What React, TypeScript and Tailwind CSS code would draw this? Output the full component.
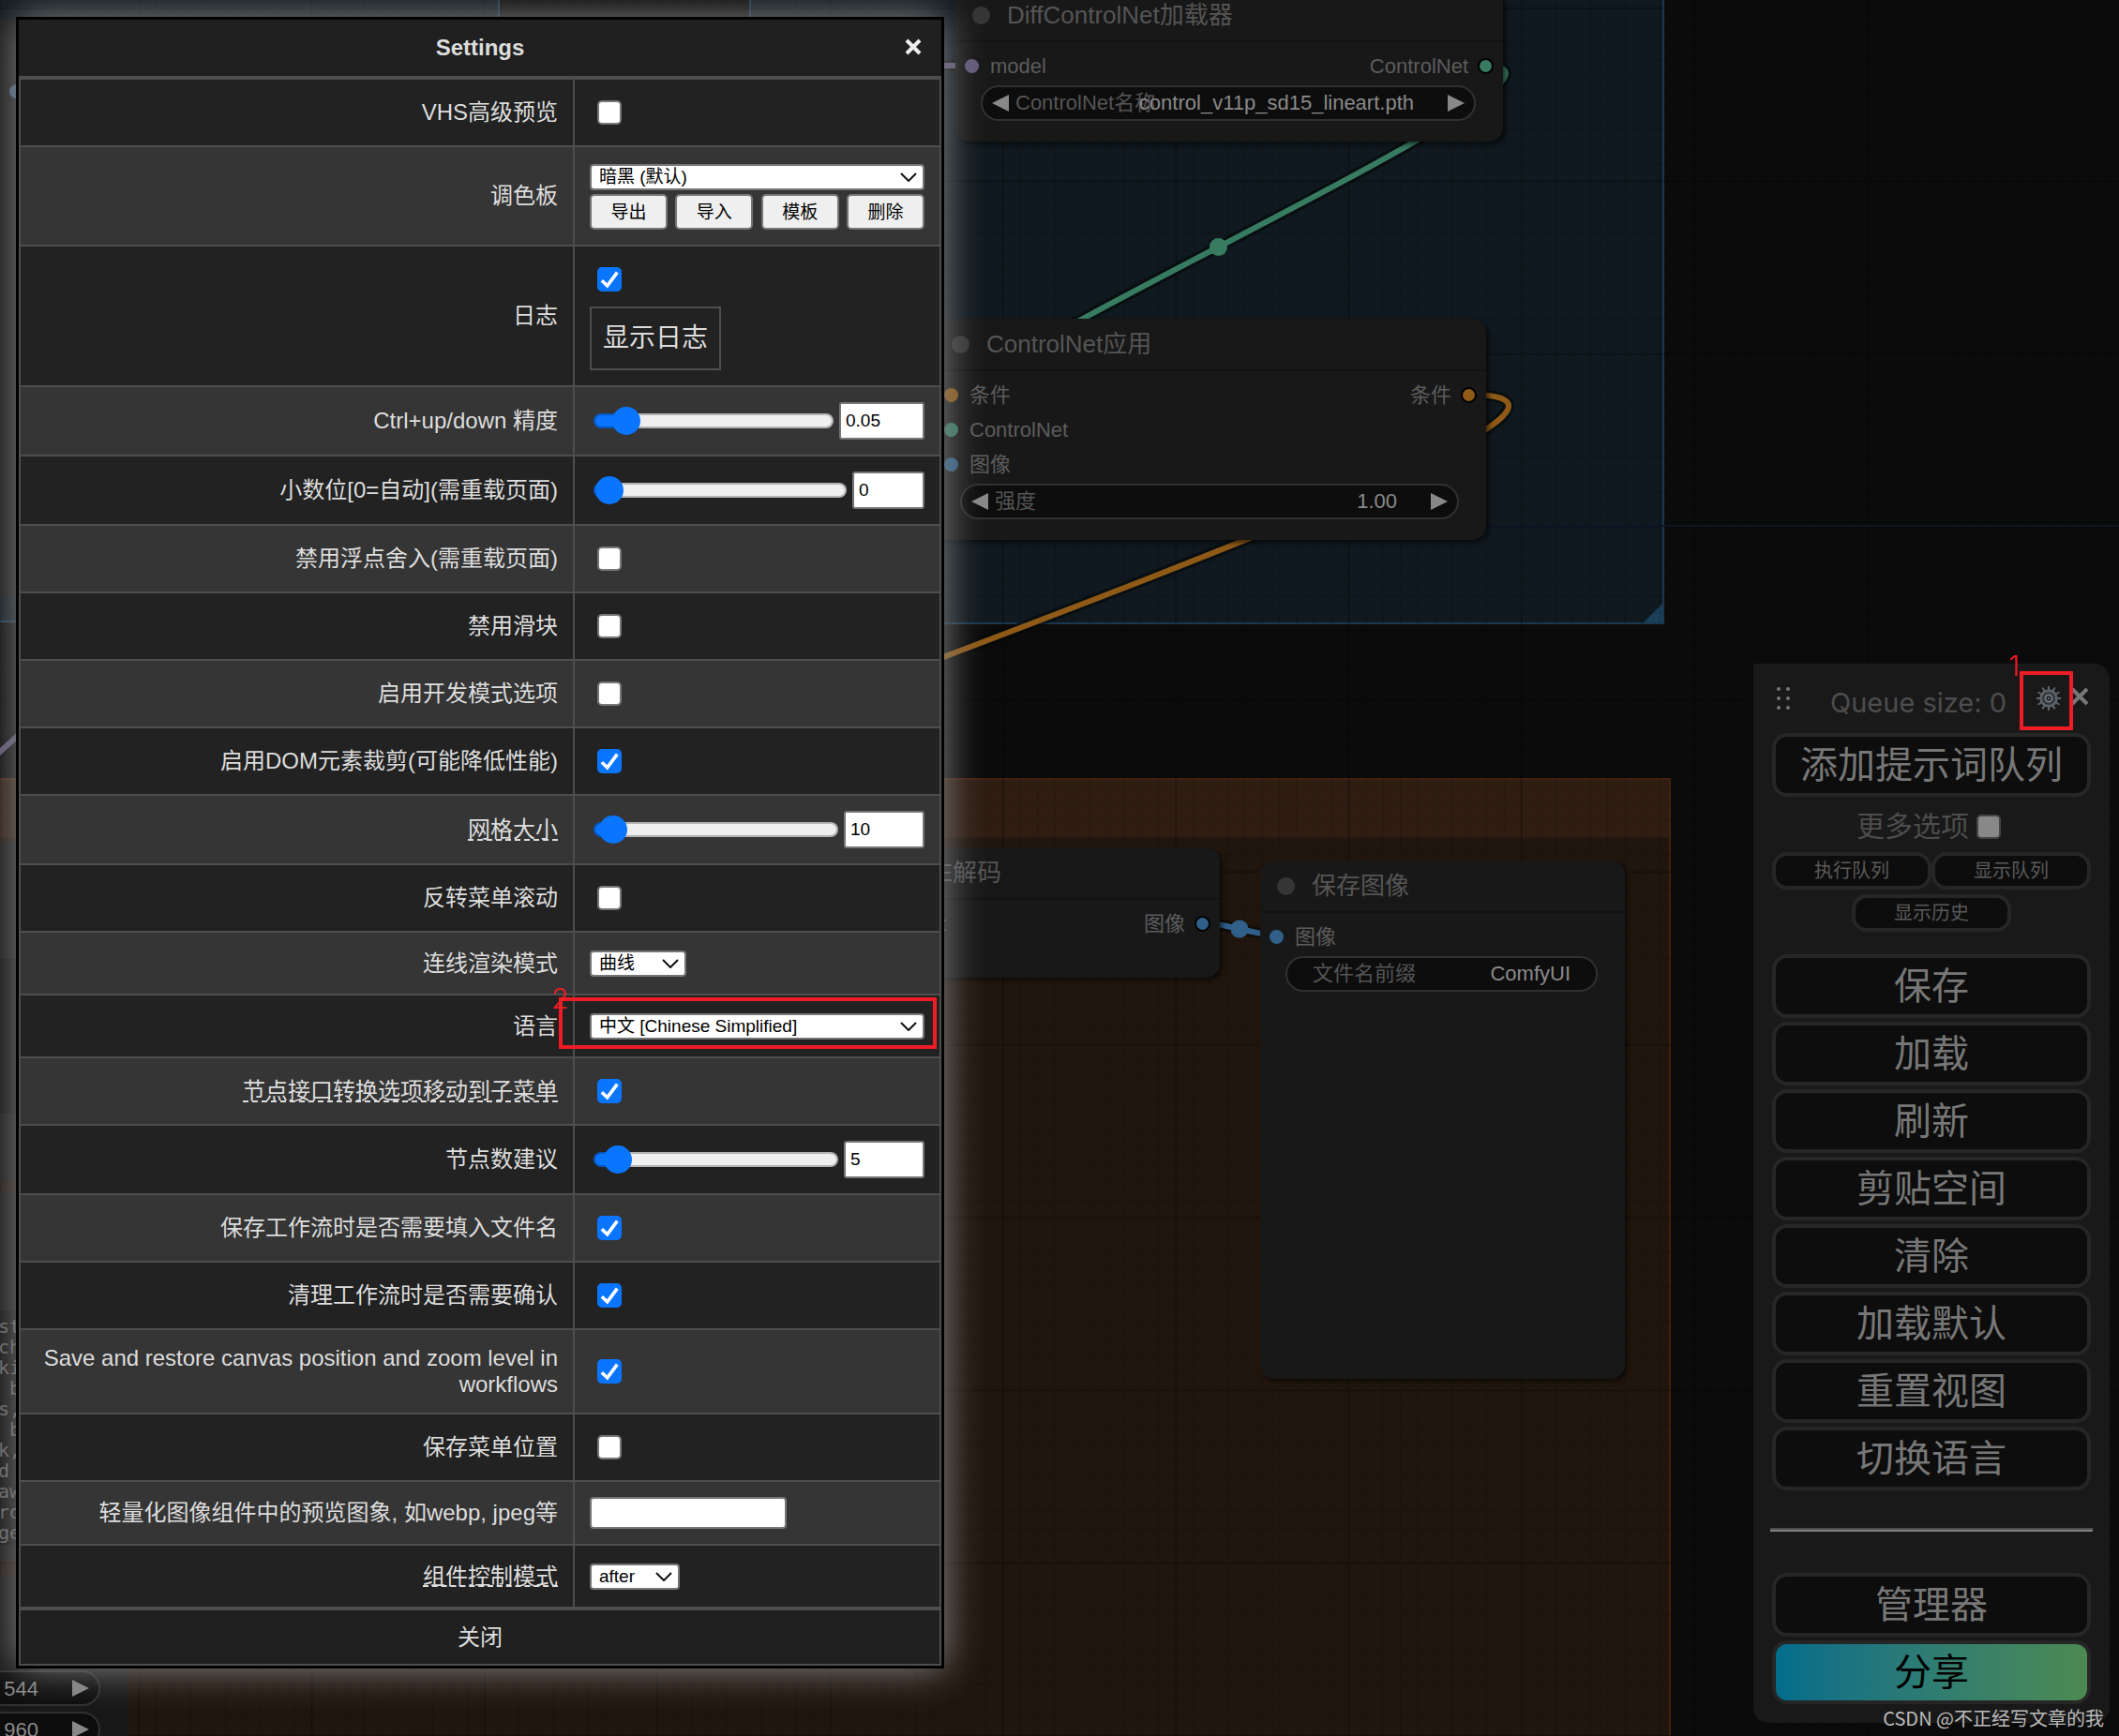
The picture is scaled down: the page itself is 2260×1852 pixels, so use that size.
/* App.tsx
 *
 * Node-graph editor with the settings dialog open. Three layers:
 *   * Canvas: groups, links and nodes placed at their graph positions.
 *   * Menu: the floating queue/menu panel on the right.
 *   * SettingsDialog: label/value table with real form controls. */

import { useState } from 'react'
import type { ReactNode } from 'react'

/* ---------- canvas ---------- */

function Slot({
  color,
  label,
  output,
}: {
  color: string
  label: string
  output?: { color: string; label: string }
}) {
  return (
    <div className="flex h-[37px] items-center justify-between px-[10px]">
      <div className="flex items-center gap-3">
        {label && <span className="size-[15px] rounded-full" style={{ background: color }} />}
        <span>{label}</span>
      </div>
      {output && (
        <div className="flex items-center gap-[10px]">
          <span>{output.label}</span>
          <span
            className="size-[17px] rounded-full border-2 border-black"
            style={{ background: output.color }}
          />
        </div>
      )}
    </div>
  )
}

function Arrow({ flip = false }: { flip?: boolean }) {
  return (
    <svg viewBox="0 0 18 18" className="h-[18px] w-[18px] shrink-0 fill-[#888]" aria-hidden="true">
      <path d={flip ? 'M18 0v18L0 9z' : 'M0 0v18l18-9z'} />
    </svg>
  )
}

function Widget({ label, value, arrows = true }: { label: string; value: string; arrows?: boolean }) {
  return (
    <div
      className={
        'mr-[29px] ml-[27px] mt-[2px] flex h-[38px] items-center rounded-full border-2 border-[#303030] bg-[#0d0d0d] ' +
        (arrows ? 'gap-[7px] px-[10px]' : 'px-[27px]')
      }
    >
      {arrows && <Arrow flip />}
      {/* zero width: a long label runs under the value instead of pushing it */}
      <span className="w-0 whitespace-nowrap text-[#555]">{label}</span>
      <span className={'flex-1 text-right text-[#8a8a8a] ' + (arrows ? 'pr-[29px]' : '')}>{value}</span>
      {arrows && <Arrow />}
    </div>
  )
}

function GraphNode({
  box,
  title,
  children,
}: {
  box: [number, number, number, number]
  title: string
  children?: ReactNode
}) {
  const [left, top, width, height] = box
  return (
    <section
      className="absolute rounded-[15px] bg-[#181818] text-[22px] leading-7 text-[#5c5c5c] shadow-[3px_3px_5px_#00000090]"
      style={{ left, top, width, height }}
    >
      <h3 className="flex h-[56px] items-center gap-[18px] border-b-2 border-[#121212] pl-[18px] text-[26px] text-[#555]">
        <span className="size-[19px] rounded-full bg-[#353535]" />
        {title}
      </h3>
      <div className="pt-[7px]">{children}</div>
    </section>
  )
}

function Links() {
  const link = (d: string, color: string) => (
    <>
      <path d={d} stroke="#050808" strokeOpacity=".6" strokeWidth="12" />
      <path d={d} stroke={color} strokeWidth="6" />
    </>
  )
  return (
    <svg className="absolute inset-0 h-full w-full" fill="none" aria-hidden="true">
      {link('M1584 70C1756 70 843 457 1015 457', '#377c61')}
      <circle cx="1299.5" cy="263.5" r="9.5" fill="#377c61" />
      {link('M1566 421C1923 421 -71 1042 286 1042', '#8f5a17')}
      {link('M1282 984C1302 984 1342 998 1362 998', '#30608a')}
      <circle cx="1322" cy="991" r="9.5" fill="#30608a" />
      {link('M960 70H1037', '#5f5675')}
      {link('M-20 820L40 766', '#5f5675')}
    </svg>
  )
}

function Grid() {
  return (
    <svg className="absolute inset-0 h-full w-full" aria-hidden="true">
      <defs>
        <pattern
          id="minor"
          width="10"
          height="10"
          patternUnits="userSpaceOnUse"
          patternTransform="translate(1069 561) scale(1.843)"
        >
          <path d="M0 0H10M0 0V10" stroke="#000" strokeOpacity=".14" strokeWidth="1.4" />
        </pattern>
        <pattern
          id="major"
          width="100"
          height="100"
          patternUnits="userSpaceOnUse"
          patternTransform="translate(1069 561) scale(1.843)"
        >
          <path d="M0 0H100M0 0V100" stroke="#000" strokeOpacity=".2" strokeWidth="2" />
        </pattern>
      </defs>
      <rect width="100%" height="100%" fill="url(#minor)" />
      <rect width="100%" height="100%" fill="url(#major)" />
      <path d="M0 561H2260" stroke="#101428" strokeWidth="2" />
    </svg>
  )
}

const PROMPT_LINES = ['st', 'ch', 'ki', ' b', 's,', ' b', 'k,', 'd ', 'aw', 'ro', 'ge']

function Canvas() {
  return (
    <div className="absolute inset-0 overflow-hidden bg-[#0b0b0b]">
      {/* groups */}
      <div className="absolute -top-4 -left-4 h-[680px] w-[549px] border-2 border-[#1a3850] bg-[#10191f]" />
      <div className="absolute -top-4 left-[799px] h-[682px] w-[976px] border-2 border-[#1a3850] bg-[#10191f]">
        <svg viewBox="0 0 20 20" className="absolute right-0 bottom-0 size-5 fill-[#1b4059]" aria-hidden="true">
          <path d="M20 0v20H0z" />
        </svg>
      </div>
      <div className="absolute top-[830px] -left-4 h-[1060px] w-[1798px] border-2 border-[#43210f] bg-[#21160e]">
        <div className="h-[62px] bg-[#2f1d12]" />
      </div>
      <Grid />
      <Links />

      {/* nodes that reach out from behind the dialog on the left */}
      <div className="absolute top-[20px] -left-10 h-[616px] w-[300px] rounded-[15px] bg-[#181818]" />
      <span className="absolute top-[90px] left-[10px] size-[15px] rounded-full bg-[#40607c]" />
      <div className="absolute top-[898px] -left-10 h-[290px] w-[300px] bg-[#181818]">
        <div className="mt-[125px] h-[165px] bg-[#0f0f0f]" />
      </div>
      <div className="absolute top-[1188px] -left-10 h-[70px] w-[300px] bg-[#181818]" />
      <div className="absolute top-[1273px] -left-10 h-[390px] w-[300px] bg-[#181818]">
        <pre className="mt-[125px] h-[250px] bg-[#0f0f0f] pt-[6px] pl-[38px] font-['DejaVu_Sans_Mono',monospace] text-[20px] leading-[22px] text-[#666]">
          {PROMPT_LINES.join('\n')}
        </pre>
      </div>
      <div className="absolute top-[1680px] -left-[200px] h-[300px] w-[336px] bg-[#181818] pt-[100px] text-[22px]">
        <Widget label="" value="544" />
        <div className="h-1" />
        <Widget label="" value="960" />
      </div>

      <GraphNode box={[1019, -11, 584, 162]} title="DiffControlNet加载器">
        <Slot color="#655a7c" label="model" output={{ color: '#377c61', label: 'ControlNet' }} />
        <Widget label="ControlNet名称" value="control_v11p_sd15_lineart.pth" />
      </GraphNode>
      <GraphNode box={[997, 340, 588, 236]} title="ControlNet应用">
        <Slot color="#8f5a17" label="条件" output={{ color: '#8f5a17', label: '条件' }} />
        <Slot color="#377c61" label="ControlNet" />
        <Slot color="#30608a" label="图像" />
        <Widget label="强度" value="1.00" />
      </GraphNode>
      <GraphNode box={[911, 904, 390, 139]} title="VAE解码">
        <Slot color="#655a7c" label="Latent" output={{ color: '#30608a', label: '图像' }} />
        <Slot color="#377c61" label="VAE" />
      </GraphNode>
      <GraphNode box={[1344, 918, 389, 553]} title="保存图像">
        <Slot color="#30608a" label="图像" />
        <Widget label="文件名前缀" value="ComfyUI" arrows={false} />
      </GraphNode>
    </div>
  )
}

/* ---------- menu panel ---------- */

function MenuButton({ children }: { children: ReactNode }) {
  return (
    <button
      type="button"
      className="flex h-[68px] w-full items-center justify-center rounded-2xl border-4 border-[#262626] bg-[#0d0d0d] text-[40px] leading-none text-[#777]"
    >
      {children}
    </button>
  )
}

function SmallButton({ children }: { children: ReactNode }) {
  return (
    <button
      type="button"
      className="flex h-10 w-1/2 items-center justify-center rounded-2xl border-4 border-[#262626] bg-[#0d0d0d] text-[20px] leading-none text-[#5a5a5a]"
    >
      {children}
    </button>
  )
}

// Twelve-toothed cog with a ring hub.
function GearIcon() {
  return (
    <svg viewBox="0 0 26 26" className="size-[26px]" fill="none" aria-hidden="true">
      {[0, 30, 60, 90, 120, 150].map((angle) => (
        <path
          key={angle}
          d="M13 .5V25.5"
          stroke="#5d6469"
          strokeWidth="2"
          strokeLinecap="round"
          transform={`rotate(${angle} 13 13)`}
        />
      ))}
      <circle cx="13" cy="13" r="8.4" fill="#33383c" stroke="#5d6469" strokeWidth="2.6" />
      <circle cx="13" cy="13" r="3.6" fill="#202326" stroke="#767d82" strokeWidth="1.8" />
      <circle cx="13" cy="13" r="1" fill="#767d82" />
    </svg>
  )
}

const MENU_ITEMS = ['保存', '加载', '刷新', '剪贴空间', '清除', '加载默认', '重置视图', '切换语言']

function Menu() {
  return (
    <aside className="absolute top-[708px] right-[10px] w-[380px] rounded-2xl rounded-tl-none bg-[#191919] px-5 pb-5 font-['Inter','Noto_Sans_CJK_SC',sans-serif]">
      <header className="flex h-[74px] items-start pt-6 pr-[2px] pl-1">
        <svg viewBox="0 0 18 26" className="mt-px h-[26px] w-[18px] fill-[#777]" aria-hidden="true">
          {[3, 13].map((x) => [2, 12, 22].map((y) => <circle key={x + '-' + y} cx={x} cy={y} r="2" />))}
        </svg>
        <span className="ml-10 text-[29px] leading-9 whitespace-nowrap text-[#4d4d4d]">Queue size: 0</span>
        <button type="button" aria-label="Settings" className="ml-auto">
          <GearIcon />
        </button>
        <button type="button" aria-label="Close menu" className="ml-[10px]">
          <svg viewBox="0 0 20 20" className="mt-[1px] size-5" aria-hidden="true">
            <path d="M2 2l16 16M18 2L2 18" stroke="#777" strokeWidth="4" />
          </svg>
        </button>
      </header>

      <MenuButton>添加提示词队列</MenuButton>
      <label className="flex h-[59px] items-center justify-center gap-2 pt-1 pr-[6px] text-[30px] text-[#4d4d4d]">
        <span>更多选项</span>
        <input
          type="checkbox"
          className="size-[26px] appearance-none rounded-[5px] border-2 border-[#444] bg-[#888]"
        />
      </label>
      <div className="flex flex-wrap justify-center gap-y-[5px]">
        <SmallButton>执行队列</SmallButton>
        <SmallButton>显示队列</SmallButton>
        <SmallButton>显示历史</SmallButton>
      </div>

      <div className="mt-6 flex flex-col gap-1">
        {MENU_ITEMS.map((item) => (
          <MenuButton key={item}>{item}</MenuButton>
        ))}
      </div>

      <hr className="-mx-[2px] mt-10 mb-11 border-t-2 border-b-2 border-t-[#4d4d4d] border-b-[#808080]" />

      <div className="flex flex-col gap-1">
        <MenuButton>管理器</MenuButton>
        <button
          type="button"
          className="flex h-[68px] w-full items-center justify-center rounded-2xl border-4 border-[#262626] bg-linear-to-r from-[#006c8c] to-[#4d8a50] bg-origin-border text-[40px] leading-none text-black"
        >
          分享
        </button>
      </div>
    </aside>
  )
}

/* ---------- settings dialog ---------- */

function Checkbox({ id, on = false }: { id: string; on?: boolean }) {
  return (
    <div className="flex px-2 py-[6px]">
      <div className="relative size-[26px]">
        <input
          id={id}
          type="checkbox"
          defaultChecked={on}
          className="peer block size-[26px] appearance-none rounded-[5px] border-2 border-[#767676] bg-white checked:border-[#0a75ff] checked:bg-[#0a75ff]"
        />
        <svg
          viewBox="0 0 26 26"
          fill="none"
          className="pointer-events-none absolute inset-0 hidden peer-checked:block"
          aria-hidden="true"
        >
          <path d="M4.8 14.2l5.9 5.6L21.3 5.6" stroke="#fff" strokeWidth="3.6" />
        </svg>
      </div>
    </div>
  )
}

function Select({ id, width, options }: { id: string; width: string; options: string[] }) {
  return (
    <div className={'relative ' + width}>
      <select
        id={id}
        className="block h-7 w-full appearance-none rounded-[4px] border-2 border-[#767676] bg-white pl-2 text-[19px] leading-6 text-black"
      >
        {options.map((o) => (
          <option key={o}>{o}</option>
        ))}
      </select>
      <svg
        viewBox="0 0 18 10"
        fill="none"
        className="pointer-events-none absolute top-[9px] right-2 h-[10px] w-[18px]"
        aria-hidden="true"
      >
        <path d="M1 1l8 8 8-8" stroke="#111" strokeWidth="2" />
      </svg>
    </div>
  )
}

function SliderField({
  id,
  value,
  min,
  max,
  step,
  width,
}: {
  id: string
  value: number
  min: number
  max: number
  step: number
  width: string
}) {
  const [current, setCurrent] = useState(value)
  const fill = 15 + ((current - min) / (max - min)) * 226
  return (
    <div className="flex items-center gap-[6px] pl-1">
      <input
        id={id}
        type="range"
        min={min}
        max={max}
        step={step}
        value={current}
        onChange={(e) => setCurrent(Number(e.target.value))}
        className="h-4 min-w-0 flex-1 appearance-none rounded-full border-2 border-black/25 [&::-webkit-slider-thumb]:size-[30px] [&::-webkit-slider-thumb]:appearance-none [&::-webkit-slider-thumb]:rounded-full [&::-webkit-slider-thumb]:bg-[#0a75ff]"
        style={{ background: `linear-gradient(90deg, #0a75ff ${fill}px, #efefef ${fill}px) border-box` }}
      />
      <input
        type="text"
        inputMode="decimal"
        aria-label={id + ' value'}
        value={current}
        onChange={(e) => setCurrent(Number(e.target.value) || 0)}
        className={'h-10 rounded-[3px] border-2 border-[#767676] bg-white px-[5px] text-[19px] text-black ' + width}
      />
    </div>
  )
}

function Row({
  id,
  label,
  hint = false,
  children,
}: {
  id: string
  label: string
  hint?: boolean
  children: ReactNode
}) {
  return (
    <tr className="group odd:bg-[#222] even:bg-[#353535]">
      <th
        scope="row"
        className="w-[591px] border-t-2 border-r-2 border-[#4e4e4e] p-4 text-right font-normal group-first:border-t-0"
      >
        <label
          htmlFor={id}
          className={hint ? 'underline decoration-dashed decoration-2 underline-offset-2' : ''}
        >
          {label}
        </label>
      </th>
      <td className="border-t-2 border-[#4e4e4e] p-4 group-first:border-t-0">{children}</td>
    </tr>
  )
}

// Gives a 28px select the same line box as the label beside it.
function SelectLine({ children }: { children: ReactNode }) {
  return <div className="flex h-[33px] items-center">{children}</div>
}

const PALETTE_ACTIONS = ['导出', '导入', '模板', '删除']

function SettingsDialog() {
  return (
    <div
      role="dialog"
      aria-labelledby="settings-title"
      className="absolute top-[18px] left-[17px] w-[990px] border-[3px] border-black bg-[#202020] text-[24px] leading-7 text-[#ddd] shadow-[0_0_40px_#888]"
    >
      <header className="relative flex h-[62px] items-center justify-center border-b-2 border-[#4e4e4e]">
        <h2 id="settings-title" className="font-bold">
          Settings
        </h2>
        <button type="button" aria-label="Close" className="absolute top-[19px] right-[20px]">
          <svg viewBox="0 0 20 20" className="size-5" aria-hidden="true">
            <path d="M3 3l14 14M17 3L3 17" stroke="#eee" strokeWidth="4" />
          </svg>
        </button>
      </header>

      <table className="w-full table-fixed border-separate border-spacing-0 border-2 border-[#4e4e4e]">
        <tbody>
          <Row id="vhs" label="VHS高级预览">
            <Checkbox id="vhs" />
          </Row>
          <Row id="palette" label="调色板">
            <div className="flex h-[72px] flex-col justify-end gap-1">
              <Select id="palette" width="w-full" options={['暗黑 (默认)']} />
              <div className="flex justify-between">
                {PALETTE_ACTIONS.map((action) => (
                  <button
                    key={action}
                    type="button"
                    className="h-[38px] w-[83px] rounded-[5px] border-2 border-[#767676] bg-[#efefef] text-[19px] leading-none text-black"
                  >
                    {action}
                  </button>
                ))}
              </div>
            </div>
          </Row>
          <Row id="log" label="日志">
            <Checkbox id="log" on />
            <button type="button" className="mt-[10px] block h-[68px] border-2 border-[#4e4e4e] px-3 text-[28px]">
              显示日志
            </button>
          </Row>
          <Row id="precision" label="Ctrl+up/down 精度">
            <SliderField id="precision" value={0.05} min={0.01} max={0.5} step={0.01} width="w-[91px]" />
          </Row>
          <Row id="decimals" label="小数位[0=自动](需重载页面)">
            <SliderField id="decimals" value={0} min={0} max={6} step={1} width="w-[77px]" />
          </Row>
          <Row id="rounding" label="禁用浮点舍入(需重载页面)">
            <Checkbox id="rounding" />
          </Row>
          <Row id="no-slider" label="禁用滑块">
            <Checkbox id="no-slider" />
          </Row>
          <Row id="dev-mode" label="启用开发模式选项">
            <Checkbox id="dev-mode" />
          </Row>
          <Row id="dom-clip" label="启用DOM元素裁剪(可能降低性能)">
            <Checkbox id="dom-clip" on />
          </Row>
          <Row id="grid-size" label="网格大小" hint>
            <SliderField id="grid-size" value={10} min={1} max={500} step={1} width="w-[86px]" />
          </Row>
          <Row id="invert-scroll" label="反转菜单滚动">
            <Checkbox id="invert-scroll" />
          </Row>
          <Row id="link-mode" label="连线渲染模式">
            <SelectLine>
              <Select id="link-mode" width="w-[103px]" options={['曲线', '直线', '隐藏']} />
            </SelectLine>
          </Row>
          <Row id="language" label="语言">
            <SelectLine>
              <Select id="language" width="w-full" options={['中文 [Chinese Simplified]', 'English']} />
            </SelectLine>
          </Row>
          <Row id="submenu" label="节点接口转换选项移动到子菜单" hint>
            <Checkbox id="submenu" on />
          </Row>
          <Row id="suggestions" label="节点数建议">
            <SliderField id="suggestions" value={5} min={0} max={128} step={1} width="w-[86px]" />
          </Row>
          <Row id="ask-name" label="保存工作流时是否需要填入文件名">
            <Checkbox id="ask-name" on />
          </Row>
          <Row id="confirm-clear" label="清理工作流时是否需要确认">
            <Checkbox id="confirm-clear" on />
          </Row>
          <Row id="save-view" label="Save and restore canvas position and zoom level in workflows">
            <Checkbox id="save-view" on />
          </Row>
          <Row id="menu-pos" label="保存菜单位置">
            <Checkbox id="menu-pos" />
          </Row>
          <Row id="preview-format" label="轻量化图像组件中的预览图象, 如webp, jpeg等">
            <input
              id="preview-format"
              type="text"
              className="block h-[34px] w-[210px] rounded-[4px] border-2 border-[#767676] bg-white px-1 text-[19px] text-black"
            />
          </Row>
          <Row id="control-mode" label="组件控制模式" hint>
            <SelectLine>
              <Select id="control-mode" width="w-[96px]" options={['after', 'before']} />
            </SelectLine>
          </Row>
        </tbody>
      </table>
      <button type="button" className="block h-[61px] w-full border-2 border-[#4e4e4e]">
        关闭
      </button>
    </div>
  )
}

/* ---------- page ---------- */

function App() {
  return (
    <main className="relative h-screen min-h-[1852px] overflow-hidden bg-[#0b0b0b] font-['Liberation_Sans','Noto_Sans_CJK_SC',sans-serif]">
      <Canvas />
      <Menu />
      <SettingsDialog />

      {/* step markers */}
      <div className="absolute top-[716px] right-[49px] h-[63px] w-[57px] border-4 border-[#ee1c25]" />
      <span className="absolute top-[692px] right-[106px] font-['Inter',sans-serif] text-[30px] leading-9 font-light text-[#ee1c25]">
        1
      </span>
      <div className="absolute top-[1064px] left-[596px] h-[55px] w-[403px] border-4 border-[#ee1c25]" />
      <span className="absolute top-[1047px] left-[588px] font-['Inter',sans-serif] text-[30px] leading-9 font-light text-[#ee1c25]">
        2
      </span>

      <span className="absolute right-4 bottom-[3px] font-['Noto_Sans_CJK_SC',sans-serif] text-[20px] leading-8 text-[#bbb]">
        CSDN @不正经写文章的我
      </span>
    </main>
  )
}

export default App
